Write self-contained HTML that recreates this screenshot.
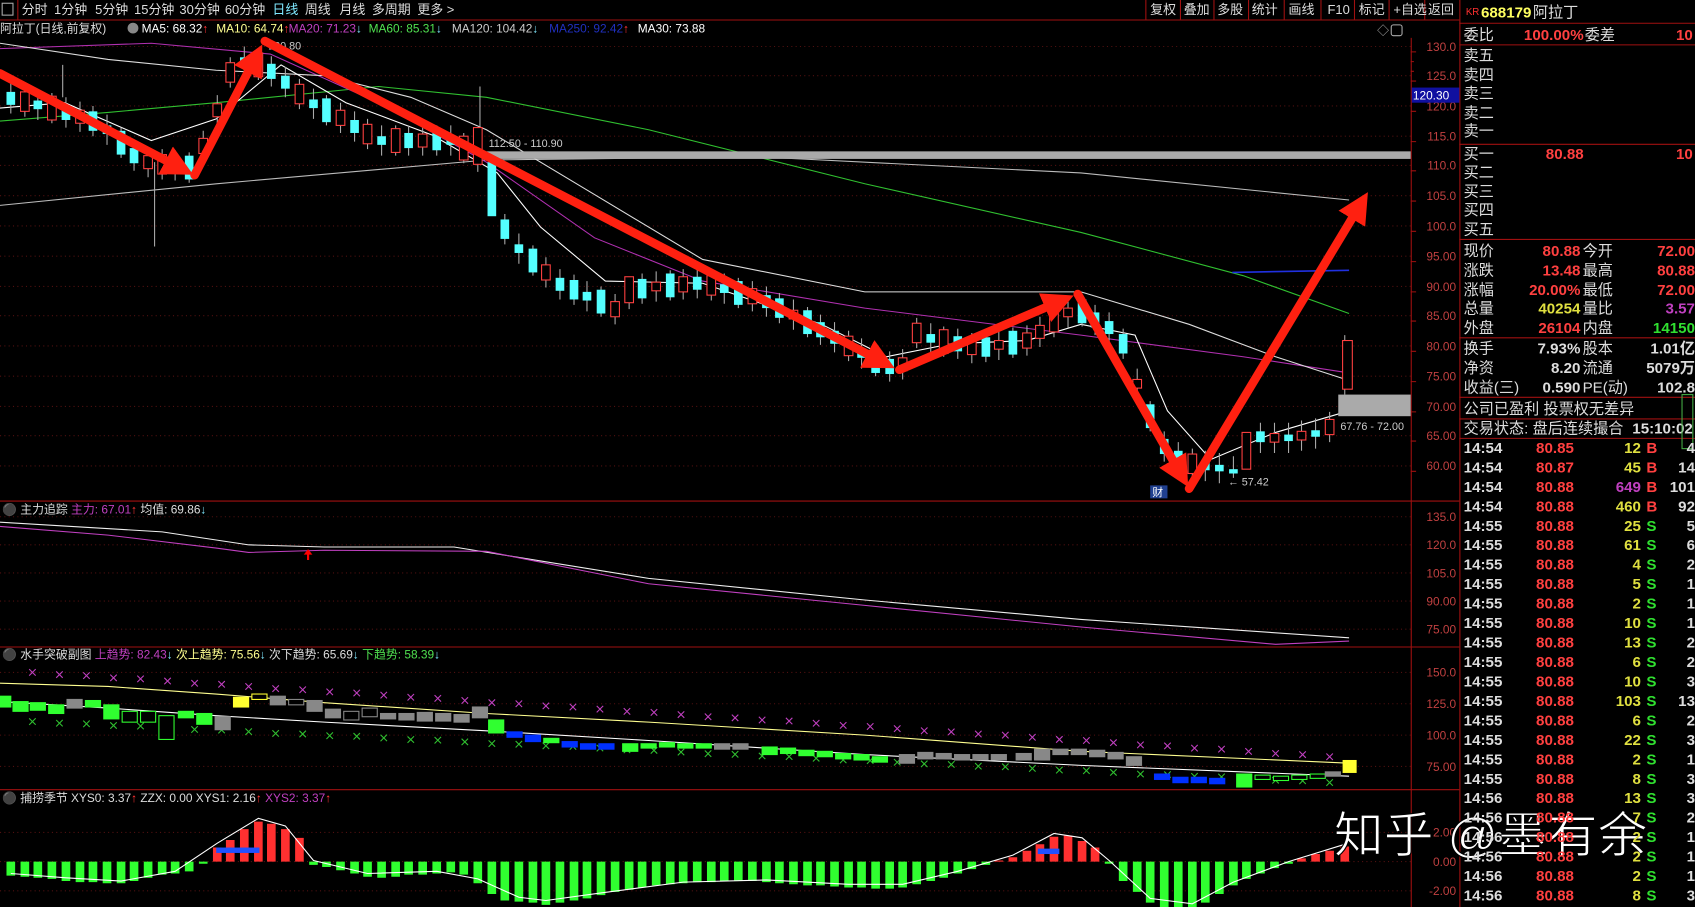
<!DOCTYPE html>
<html><head><meta charset="utf-8"><style>
html,body{margin:0;padding:0;background:#000;width:1695px;height:907px;overflow:hidden}
svg{display:block}
text{font-family:"Liberation Sans","Noto Sans CJK SC",sans-serif}
.u{fill:#000;stroke:#ff4040;stroke-width:1}
.d{fill:#54ffff}
.ax text{fill:#c04040;font-size:11px;text-anchor:end}
.gl line{stroke:#501010;stroke-dasharray:1 3}
.rp text{font-size:14px;fill:#ddd}
.b{font-weight:bold}
.r{fill:#ff4040 !important}
.y{fill:#e0e040 !important}
.g{fill:#30e030 !important}
.p{fill:#c040c0 !important}
.e{text-anchor:end}
</style></head><body>
<svg width="1695" height="907" viewBox="0 0 1568 839" preserveAspectRatio="none" xmlns="http://www.w3.org/2000/svg">
<defs>
<marker id="ah" viewBox="0 0 10 10" refX="5" refY="5" markerWidth="3.6" markerHeight="3.6" orient="auto" markerUnits="strokeWidth"><path d="M0 0L10 5L0 10z" fill="#ff2010"/></marker>
<marker id="xp" viewBox="-4 -4 8 8" markerWidth="8" markerHeight="8" markerUnits="userSpaceOnUse"><path d="M-3 -3L3 3M3 -3L-3 3" stroke="#c040c0" stroke-width="1"/></marker>
<marker id="xg" viewBox="-4 -4 8 8" markerWidth="8" markerHeight="8" markerUnits="userSpaceOnUse"><path d="M-3 -3L3 3M3 -3L-3 3" stroke="#30c030" stroke-width="1"/></marker>
</defs>
<rect width="1568" height="839" fill="#000"/>
<g class="gl">
<line x1="0" x2="1305" y1="43" y2="43"/><line x1="0" x2="1305" y1="70" y2="70"/><line x1="0" x2="1305" y1="98" y2="98"/><line x1="0" x2="1305" y1="126" y2="126"/><line x1="0" x2="1305" y1="153" y2="153"/><line x1="0" x2="1305" y1="181" y2="181"/><line x1="0" x2="1305" y1="209" y2="209"/><line x1="0" x2="1305" y1="237" y2="237"/><line x1="0" x2="1305" y1="265" y2="265"/><line x1="0" x2="1305" y1="292" y2="292"/><line x1="0" x2="1305" y1="320" y2="320"/><line x1="0" x2="1305" y1="348" y2="348"/><line x1="0" x2="1305" y1="376" y2="376"/><line x1="0" x2="1305" y1="403" y2="403"/><line x1="0" x2="1305" y1="431" y2="431"/>
<line x1="0" x2="1305" y1="478" y2="478"/><line x1="0" x2="1305" y1="504" y2="504"/><line x1="0" x2="1305" y1="530" y2="530"/><line x1="0" x2="1305" y1="556" y2="556"/><line x1="0" x2="1305" y1="582" y2="582"/>
<line x1="0" x2="1305" y1="622" y2="622"/><line x1="0" x2="1305" y1="651" y2="651"/><line x1="0" x2="1305" y1="680" y2="680"/><line x1="0" x2="1305" y1="709" y2="709"/>
<line x1="0" x2="1305" y1="770" y2="770"/><line x1="0" x2="1305" y1="797" y2="797"/><line x1="0" x2="1305" y1="824" y2="824"/>
</g>
<g stroke="#a01010" stroke-width="1" fill="none">
<line x1="0" y1="18.5" x2="1350" y2="18.5"/>
<line x1="1305.5" y1="35" x2="1305.5" y2="839"/>
<line x1="1350.5" y1="0" x2="1350.5" y2="839"/>
<line x1="0" y1="463.5" x2="1350" y2="463.5"/>
<line x1="0" y1="598.5" x2="1350" y2="598.5"/>
<line x1="0" y1="730.5" x2="1350" y2="730.5"/>
<line x1="1350" y1="21.5" x2="1568" y2="21.5"/>
<line x1="1350" y1="41.5" x2="1568" y2="41.5"/>
<line x1="1350" y1="133.5" x2="1568" y2="133.5"/>
<line x1="1350" y1="221.5" x2="1568" y2="221.5"/>
<line x1="1350" y1="312.5" x2="1568" y2="312.5"/>
<line x1="1350" y1="367.5" x2="1568" y2="367.5"/>
<line x1="1350" y1="387.5" x2="1568" y2="387.5"/>
<line x1="1350" y1="405.5" x2="1568" y2="405.5"/>
<line x1="16.5" y1="0" x2="16.5" y2="18"/>
<line x1="1060" y1="0" x2="1060" y2="18"/><line x1="1092" y1="0" x2="1092" y2="18"/><line x1="1123" y1="0" x2="1123" y2="18"/><line x1="1155" y1="0" x2="1155" y2="18"/><line x1="1188" y1="0" x2="1188" y2="18"/><line x1="1222" y1="0" x2="1222" y2="18"/><line x1="1253" y1="0" x2="1253" y2="18"/><line x1="1285" y1="0" x2="1285" y2="18"/><line x1="1318" y1="0" x2="1318" y2="18"/>
<path d="M1305 48h5M1305 57h3M1305 66h3M1305 75h5M1305 103h5M1305 131h5M1305 158h5M1305 186h5M1305 214h5M1305 242h5M1305 270h5M1305 297h5M1305 325h5M1305 353h5M1305 381h5M1305 408h5M1305 436h5"/>
</g>
<g font-size="12" fill="#ddd">
<rect x="2" y="3" width="10" height="11" fill="none" stroke="#aaa"/>
<text x="20" y="13">分时</text><text x="50" y="13">1分钟</text><text x="88" y="13">5分钟</text><text x="124" y="13">15分钟</text><text x="166" y="13">30分钟</text><text x="208" y="13">60分钟</text>
<text x="252" y="13" fill="#7fe8ff">日线</text><text x="282" y="13">周线</text><text x="314" y="13">月线</text><text x="344" y="13">多周期</text><text x="386" y="13">更多 &gt;</text>
<text x="1064" y="13">复权</text><text x="1095" y="13">叠加</text><text x="1126" y="13">多股</text><text x="1158" y="13">统计</text><text x="1192" y="13">画线</text><text x="1228" y="13">F10</text><text x="1257" y="13">标记</text><text x="1289" y="13">+自选</text><text x="1321" y="13">返回</text>
</g>
<text x="1356" y="14" font-size="9" fill="#ff3030">KR</text><text x="1370" y="16" font-size="14" fill="#ffff60" font-weight="bold">688179</text><text x="1418" y="16" font-size="14" fill="#ddd">阿拉丁</text>
<g font-size="11">
<text x="0" y="30" fill="#ddd">阿拉丁(日线,前复权)</text>
<circle cx="123" cy="26" r="5" fill="#888"/>
<text x="131" y="30" fill="#fff">MA5: 68.32<tspan fill="#f33">↑</tspan></text>
<text x="200" y="30" fill="#ffff90">MA10: 64.74<tspan fill="#f33">↑</tspan></text>
<text x="267" y="30" fill="#c040c0">MA20: 71.23<tspan fill="#7fe8ff">↓</tspan></text>
<text x="341" y="30" fill="#50e050">MA60: 85.31<tspan fill="#7fe8ff">↓</tspan></text>
<text x="418" y="30" fill="#ccc">MA120: 104.42<tspan fill="#7fe8ff">↓</tspan></text>
<text x="508" y="30" fill="#2030c0">MA250: 92.42<tspan fill="#f33">↑</tspan></text>
<text x="590" y="30" fill="#fff">MA30: 73.88</text>
<text x="1274" y="32" fill="#aaa">◇</text><rect x="1287" y="23" width="10" height="10" fill="none" stroke="#aaa" rx="2"/>
</g>
<g font-size="11">
<text x="2" y="475" fill="#ddd">⚫ 主力追踪 <tspan fill="#c040c0">主力: 67.01</tspan><tspan fill="#f33">↑</tspan> 均值: 69.86<tspan fill="#7fe8ff">↓</tspan></text>
<text x="2" y="609" fill="#ddd">⚫ 水手突破副图 <tspan fill="#c040c0">上趋势: 82.43</tspan><tspan fill="#7fe8ff">↓</tspan> <tspan fill="#ffff90">次上趋势: 75.56</tspan><tspan fill="#7fe8ff">↓</tspan> 次下趋势: 65.69<tspan fill="#7fe8ff">↓</tspan> <tspan fill="#50e050">下趋势: 58.39</tspan><tspan fill="#7fe8ff">↓</tspan></text>
<text x="2" y="742" fill="#ddd">⚫ 捕捞季节 XYS0: 3.37<tspan fill="#f33">↑</tspan>    ZZX: 0.00      XYS1: 2.16<tspan fill="#f33">↑</tspan> <tspan fill="#c040c0">XYS2: 3.37</tspan><tspan fill="#f33">↑</tspan></text>
</g>
<g fill="none" stroke-width="1">
<polyline stroke="#bbb" points="0,190 200,170 450,148 700,145 1000,160 1248,185"/>
<polyline stroke="#30c030" points="0,112 100,104 200,95 350,80 450,90 600,120 800,170 1000,215 1150,255 1248,290"/>
<polyline stroke="#b030b0" points="0,45 140,40 250,50 350,95 450,150 550,220 650,260 800,285 1000,310 1150,330 1248,345"/>
<polyline stroke="#ddd" points="0,40 100,55 200,65 300,70 380,90 450,120 550,180 650,240 800,270 1000,270 1100,300 1180,330 1248,352"/>
<polyline stroke="#fff" points="0,100 60,95 140,130 200,110 260,60 320,95 400,125 460,160 500,210 560,260 650,262 760,300 820,330 880,318 950,315 1000,300 1050,310 1080,380 1120,425 1180,400 1248,380"/>
<line x1="1140" y1="252" x2="1248" y2="250" stroke="#2030e0" stroke-width="1.5"/>
</g>
<path fill="none" stroke="#aaa" stroke-width="1" d="M10 77v28M23 80v28M35 83v28M48 86v28M61 90v28M74 94v28M86 98v28M99 106v28M112 118v28M124 130v28M137 136v28M150 138v28M162 139v28M175 141v28M188 121v28M201 88v28M213 53v28M226 43v28M239 46v28M251 52v28M264 62v28M277 73v28M290 82v28M302 88v28M315 95v28M328 103v28M340 110v28M353 116v28M366 116v28M378 116v28M391 116v28M404 116v28M417 116v28M429 123v28M442 131v28M455 161v28M467 198v28M480 216v28M493 227v28M505 238v28M518 249v28M531 254v28M543 260v28M556 265v28M569 272v28M582 258v28M594 253v28M607 251v28M620 250v28M632 249v28M645 248v28M658 250v28M670 253v28M683 257v28M696 260v28M709 265v28M721 271v28M734 277v28M747 284v28M759 291v28M772 298v28M785 306v28M797 313v28M810 320v28M823 325v28M835 323v28M848 294v28M861 299v28M873 302v28M886 304v28M899 308v28M912 307v28M924 305v28M937 303v28M950 301v28M962 293v28M975 284v28M988 275v28M1001 274v28M1013 282v28M1026 289v28M1039 304v28M1052 341v28M1064 371v28M1077 399v28M1090 409v28M1103 415v28M1115 417v28M1128 419v28M1141 422v20M1153 406v28M1166 391v28M1179 391v28M1192 391v28M1204 389v28M1217 387v28M1230 381v28M1244 310v55M143 150v78M444 80v70M58 60v30"/>
<g>
<rect class="d" x="6" y="85" width="8" height="12"/><rect class="u" x="19" y="85" width="8" height="18"/><rect class="d" x="31" y="93" width="8" height="8"/><rect class="u" x="44" y="89" width="8" height="22"/><rect class="d" x="57" y="97" width="8" height="14"/><rect class="u" x="70" y="102" width="8" height="12"/><rect class="d" x="82" y="103" width="8" height="18"/><rect class="d" x="95" y="116" width="8" height="8"/><rect class="d" x="108" y="121" width="8" height="22"/><rect class="d" x="120" y="137" width="8" height="14"/>
<rect class="u" x="133" y="144" width="8" height="12"/><rect class="u" x="146" y="143" width="8" height="18"/><rect class="d" x="158" y="149" width="8" height="8"/><rect class="d" x="171" y="144" width="8" height="22"/><rect class="u" x="184" y="128" width="8" height="14"/><rect class="u" x="197" y="96" width="8" height="12"/><rect class="u" x="209" y="58" width="8" height="18"/><rect class="d" x="222" y="53" width="8" height="8"/><rect class="u" x="235" y="49" width="8" height="22"/><rect class="d" x="247" y="59" width="8" height="14"/>
<rect class="d" x="260" y="70" width="8" height="12"/><rect class="u" x="273" y="78" width="8" height="18"/><rect class="d" x="286" y="92" width="8" height="8"/><rect class="d" x="298" y="91" width="8" height="22"/><rect class="u" x="311" y="102" width="8" height="14"/><rect class="d" x="324" y="111" width="8" height="12"/><rect class="u" x="336" y="115" width="8" height="18"/><rect class="d" x="349" y="126" width="8" height="8"/><rect class="u" x="362" y="119" width="8" height="22"/><rect class="d" x="374" y="123" width="8" height="14"/>
<rect class="u" x="387" y="124" width="8" height="12"/><rect class="d" x="400" y="121" width="8" height="18"/><rect class="d" x="413" y="126" width="8" height="8"/><rect class="u" x="425" y="126" width="8" height="22"/><rect class="u" x="438" y="118" width="8" height="34"/><rect class="d" x="451" y="150" width="8" height="50"/><rect class="d" x="463" y="203" width="8" height="18"/><rect class="d" x="476" y="226" width="8" height="8"/><rect class="d" x="489" y="230" width="8" height="22"/><rect class="u" x="501" y="245" width="8" height="14"/>
<rect class="d" x="514" y="257" width="8" height="12"/><rect class="d" x="527" y="259" width="8" height="18"/><rect class="d" x="539" y="270" width="8" height="8"/><rect class="d" x="552" y="268" width="8" height="22"/><rect class="u" x="565" y="279" width="8" height="14"/><rect class="u" x="578" y="256" width="8" height="24"/><rect class="d" x="590" y="258" width="8" height="18"/><rect class="u" x="603" y="261" width="8" height="8"/><rect class="d" x="616" y="253" width="8" height="22"/><rect class="u" x="628" y="256" width="8" height="14"/>
<rect class="d" x="641" y="256" width="8" height="12"/><rect class="u" x="654" y="255" width="8" height="18"/><rect class="d" x="666" y="263" width="8" height="8"/><rect class="d" x="679" y="260" width="8" height="22"/><rect class="u" x="692" y="267" width="8" height="14"/><rect class="d" x="705" y="273" width="8" height="12"/><rect class="d" x="717" y="276" width="8" height="18"/><rect class="u" x="730" y="287" width="8" height="8"/><rect class="d" x="743" y="287" width="8" height="22"/><rect class="d" x="755" y="298" width="8" height="14"/>
<rect class="d" x="768" y="306" width="8" height="12"/><rect class="u" x="781" y="311" width="8" height="18"/><rect class="d" x="793" y="323" width="8" height="8"/><rect class="d" x="806" y="323" width="8" height="22"/><rect class="d" x="819" y="332" width="8" height="14"/><rect class="u" x="831" y="331" width="8" height="12"/><rect class="u" x="844" y="299" width="8" height="18"/><rect class="d" x="857" y="309" width="8" height="8"/><rect class="u" x="869" y="305" width="8" height="22"/><rect class="d" x="882" y="311" width="8" height="14"/>
<rect class="u" x="895" y="316" width="8" height="12"/><rect class="d" x="908" y="312" width="8" height="18"/><rect class="u" x="920" y="315" width="8" height="8"/><rect class="d" x="933" y="306" width="8" height="22"/><rect class="u" x="946" y="308" width="8" height="14"/><rect class="u" x="958" y="301" width="8" height="12"/><rect class="u" x="971" y="289" width="8" height="18"/><rect class="u" x="984" y="285" width="8" height="8"/><rect class="d" x="997" y="277" width="8" height="22"/><rect class="d" x="1009" y="289" width="8" height="14"/>
<rect class="d" x="1022" y="297" width="8" height="12"/><rect class="d" x="1035" y="309" width="8" height="18"/><rect class="u" x="1048" y="351" width="8" height="8"/><rect class="d" x="1060" y="374" width="8" height="22"/><rect class="d" x="1073" y="406" width="8" height="14"/><rect class="d" x="1086" y="417" width="8" height="12"/><rect class="u" x="1099" y="420" width="8" height="18"/><rect class="d" x="1111" y="427" width="8" height="8"/><rect class="d" x="1124" y="430" width="8" height="6"/><rect class="d" x="1137" y="434" width="8" height="4"/>
<rect class="u" x="1149" y="400" width="8" height="34"/><rect class="d" x="1162" y="399" width="8" height="10"/><rect class="u" x="1175" y="401" width="8" height="8"/><rect class="d" x="1188" y="402" width="8" height="6"/><rect class="u" x="1200" y="399" width="8" height="8"/><rect class="d" x="1213" y="398" width="8" height="6"/><rect class="u" x="1226" y="388" width="8" height="14"/><rect class="u" x="1242" y="315" width="9" height="45"/>
</g>
<rect x="450" y="140" width="855" height="7" fill="#aaa"/>
<rect x="1238" y="365" width="67" height="20" fill="#aaa"/>
<text x="452" y="136" font-size="10" fill="#ccc">112.50 - 110.90</text>
<text x="1240" y="398" font-size="10" fill="#ccc">67.76 - 72.00</text>
<text x="248" y="46" font-size="10" fill="#ccc">130.80</text>
<text x="1136" y="449" font-size="10" fill="#ccc">← 57.42</text>
<rect x="1064" y="449" width="16" height="12" fill="#204090"/><text x="1066" y="459" font-size="10" fill="#fff">财</text>
<g stroke="#ff2010" stroke-width="8" marker-end="url(#ah)" stroke-linecap="round">
<line x1="0" y1="68" x2="166" y2="155"/>
<line x1="180" y1="162" x2="236" y2="54"/>
<line x1="245" y1="38" x2="815" y2="334"/>
<line x1="832" y1="342" x2="980" y2="279"/>
<line x1="997" y1="272" x2="1092" y2="438"/>
<line x1="1100" y1="452" x2="1258" y2="190"/>
</g>
<g class="ax">
<text x="1347" y="47">130.0</text><text x="1347" y="74">125.0</text><text x="1347" y="102">120.0</text><text x="1347" y="130">115.0</text><text x="1347" y="157">110.0</text><text x="1347" y="185">105.0</text><text x="1347" y="213">100.0</text><text x="1347" y="241">95.00</text><text x="1347" y="269">90.00</text><text x="1347" y="296">85.00</text><text x="1347" y="324">80.00</text><text x="1347" y="352">75.00</text><text x="1347" y="380">70.00</text><text x="1347" y="407">65.00</text><text x="1347" y="435">60.00</text>
<text x="1347" y="482">135.0</text><text x="1347" y="508">120.0</text><text x="1347" y="534">105.0</text><text x="1347" y="560">90.00</text><text x="1347" y="586">75.00</text>
<text x="1347" y="626">150.0</text><text x="1347" y="655">125.0</text><text x="1347" y="684">100.0</text><text x="1347" y="713">75.00</text>
<text x="1347" y="774">2.00</text><text x="1347" y="801">0.00</text><text x="1347" y="828">-2.00</text>
</g>
<rect x="1306" y="81" width="44" height="14" fill="#1010a0"/><text x="1307" y="92" font-size="11" fill="#fff">120.30</text>
<polyline fill="none" stroke="#eee" points="0,483 150,492 230,504 300,506 420,506 600,535 800,555 1000,573 1248,590"/>
<polyline fill="none" stroke="#c040c0" points="0,487 100,495 200,507 230,511 300,509 450,510 600,540 800,560 1000,580 1180,596 1248,593"/>
<path d="M285 508 l-4 5 h3 v5 h2 v-5 h3 z" fill="#f00"/>
<polyline fill="none" stroke="#ffff90" points="0,632 100,635 200,642 300,650 450,660 600,668 800,680 1000,695 1248,706"/>
<polyline fill="none" stroke="#fff" points="0,649 100,655 200,662 300,668 450,676 600,685 800,698 1000,708 1248,718"/>
<polyline fill="none" stroke="none" marker-mid="url(#xp)" points="5,620 30,622 55,624 80,625 105,627 130,628 155,630 180,632 205,633 230,635 255,637 280,638 305,640 330,641 355,643 380,645 405,646 430,648 455,650 480,651 505,653 530,654 555,656 580,658 605,659 630,661 655,663 680,664 705,666 730,667 755,669 780,671 805,672 830,674 855,676 880,677 905,679 930,680 955,682 980,684 1005,685 1030,687 1055,689 1080,690 1105,692 1130,693 1155,695 1180,697 1205,698 1230,700 1250,701"/>
<polyline fill="none" stroke="none" marker-mid="url(#xg)" transform="matrix(1,-0.018,0,1,0,46)" points="5,620 30,622 55,624 80,625 105,627 130,628 155,630 180,632 205,633 230,635 255,637 280,638 305,640 330,641 355,643 380,645 405,646 430,648 455,650 480,651 505,653 530,654 555,656 580,658 605,659 630,661 655,663 680,664 705,666 730,667 755,669 780,671 805,672 830,674 855,676 880,677 905,679 930,680 955,682 980,684 1005,685 1030,687 1055,689 1080,690 1105,692 1130,693 1155,695 1180,697 1205,698 1230,700 1250,701"/>
<g stroke-width="1">
<rect x="0" y="644" width="10" height="10" fill="#30ff30" stroke="#30ff30"/><rect x="12" y="649" width="14" height="9" fill="#30ff30" stroke="#30ff30"/><rect x="28" y="650" width="14" height="7" fill="#30ff30" stroke="#30ff30"/><rect x="45" y="652" width="14" height="8" fill="#30ff30" stroke="#30ff30"/><rect x="62" y="647" width="14" height="8" fill="#888" stroke="#888"/><rect x="79" y="648" width="14" height="6" fill="#30ff30" stroke="#30ff30"/><rect x="96" y="652" width="14" height="13" fill="#30ff30" stroke="#30ff30"/><rect x="113" y="658" width="14" height="10" fill="#000" stroke="#30ff30"/><rect x="130" y="658" width="14" height="10" fill="#000" stroke="#30ff30"/><rect x="147" y="662" width="14" height="22" fill="#000" stroke="#30ff30"/>
<rect x="165" y="658" width="14" height="6" fill="#30ff30" stroke="#30ff30"/><rect x="182" y="660" width="14" height="10" fill="#30ff30" stroke="#30ff30"/><rect x="199" y="663" width="14" height="12" fill="#888" stroke="#888"/><rect x="216" y="645" width="14" height="9" fill="#ffff30" stroke="#ffff30"/><rect x="233" y="642" width="14" height="5" fill="#000" stroke="#ffff30"/><rect x="250" y="644" width="14" height="8" fill="#888" stroke="#888"/><rect x="267" y="647" width="14" height="5" fill="#000" stroke="#888"/><rect x="284" y="648" width="14" height="10" fill="#888" stroke="#888"/><rect x="301" y="656" width="14" height="8" fill="#888" stroke="#888"/><rect x="318" y="658" width="14" height="8" fill="#000" stroke="#888"/>
<rect x="335" y="655" width="14" height="8" fill="#000" stroke="#888"/><rect x="352" y="660" width="14" height="5" fill="#888" stroke="#888"/><rect x="369" y="660" width="14" height="6" fill="#888" stroke="#888"/><rect x="386" y="659" width="14" height="8" fill="#888" stroke="#888"/><rect x="403" y="660" width="14" height="7" fill="#888" stroke="#888"/><rect x="420" y="661" width="14" height="7" fill="#888" stroke="#888"/><rect x="437" y="654" width="14" height="10" fill="#888" stroke="#888"/><rect x="452" y="666" width="14" height="12" fill="#30ff30" stroke="#30ff30"/><rect x="469" y="677" width="14" height="5" fill="#0030ff" stroke="#0030ff"/><rect x="486" y="680" width="14" height="6" fill="#0030ff" stroke="#0030ff"/>
<rect x="503" y="683" width="14" height="4" fill="#30ff30" stroke="#30ff30"/><rect x="520" y="686" width="14" height="5" fill="#0030ff" stroke="#0030ff"/><rect x="537" y="688" width="14" height="5" fill="#0030ff" stroke="#0030ff"/><rect x="554" y="688" width="14" height="5" fill="#0030ff" stroke="#0030ff"/><rect x="576" y="688" width="14" height="7" fill="#30ff30" stroke="#30ff30"/><rect x="593" y="688" width="14" height="4" fill="#30ff30" stroke="#30ff30"/><rect x="610" y="687" width="14" height="4" fill="#30ff30" stroke="#30ff30"/><rect x="627" y="688" width="14" height="4" fill="#30ff30" stroke="#30ff30"/><rect x="644" y="688" width="14" height="4" fill="#30ff30" stroke="#30ff30"/><rect x="661" y="688" width="14" height="5" fill="#888" stroke="#888"/>
<rect x="678" y="688" width="14" height="5" fill="#888" stroke="#888"/><rect x="705" y="691" width="14" height="7" fill="#30ff30" stroke="#30ff30"/><rect x="722" y="692" width="14" height="5" fill="#30ff30" stroke="#30ff30"/><rect x="739" y="694" width="14" height="5" fill="#30ff30" stroke="#30ff30"/><rect x="756" y="695" width="14" height="5" fill="#30ff30" stroke="#30ff30"/><rect x="773" y="697" width="14" height="5" fill="#30ff30" stroke="#30ff30"/><rect x="790" y="698" width="14" height="5" fill="#30ff30" stroke="#30ff30"/><rect x="807" y="700" width="14" height="5" fill="#30ff30" stroke="#30ff30"/><rect x="832" y="698" width="14" height="8" fill="#888" stroke="#888"/><rect x="849" y="696" width="14" height="6" fill="#888" stroke="#888"/>
<rect x="866" y="697" width="14" height="5" fill="#888" stroke="#888"/><rect x="883" y="698" width="14" height="5" fill="#888" stroke="#888"/><rect x="900" y="698" width="14" height="5" fill="#888" stroke="#888"/><rect x="917" y="698" width="14" height="5" fill="#888" stroke="#888"/><rect x="940" y="697" width="14" height="6" fill="#888" stroke="#888"/><rect x="957" y="693" width="14" height="10" fill="#888" stroke="#888"/><rect x="974" y="693" width="14" height="5" fill="#888" stroke="#888"/><rect x="991" y="693" width="14" height="5" fill="#888" stroke="#888"/><rect x="1008" y="694" width="14" height="6" fill="#888" stroke="#888"/><rect x="1025" y="696" width="14" height="6" fill="#888" stroke="#888"/>
<rect x="1042" y="700" width="14" height="8" fill="#888" stroke="#888"/><rect x="1068" y="716" width="14" height="5" fill="#0030ff" stroke="#0030ff"/><rect x="1085" y="719" width="14" height="5" fill="#0030ff" stroke="#0030ff"/><rect x="1102" y="719" width="14" height="5" fill="#0030ff" stroke="#0030ff"/><rect x="1119" y="720" width="14" height="5" fill="#0030ff" stroke="#0030ff"/><rect x="1144" y="716" width="14" height="12" fill="#30ff30" stroke="#30ff30"/><rect x="1161" y="717" width="14" height="4" fill="#000" stroke="#30ff30"/><rect x="1178" y="718" width="14" height="4" fill="#000" stroke="#30ff30"/><rect x="1195" y="717" width="14" height="4" fill="#000" stroke="#30ff30"/><rect x="1212" y="716" width="14" height="4" fill="#000" stroke="#30ff30"/><rect x="1226" y="714" width="14" height="4" fill="#888" stroke="#888"/>
</g>
<rect x="1242" y="703" width="13" height="12" fill="#ffff30"/>
<path fill="none" stroke="#30ff30" stroke-width="8" d="M10 797V810M23 797V811M35 797V812M48 797V813M61 797V815M74 797V816M86 797V816M99 797V817M112 797V817M124 797V815M137 797V812M150 797V809M162 797V808M175 797V806M188 797V799M290 797V800M302 797V802M315 797V805M328 797V808M340 797V811M353 797V812M366 797V811M378 797V809M391 797V809M404 797V808M417 797V807M429 797V809M442 797V817M455 797V827M467 797V833M480 797V834M493 797V835M505 797V837M518 797V835M531 797V833M543 797V831M556 797V828M569 797V825M582 797V823M594 797V821M607 797V819M620 797V818M632 797V817M645 797V816M658 797V816M670 797V815M683 797V815M696 797V815M709 797V816M721 797V817M734 797V818M747 797V819M759 797V819M772 797V820M785 797V821M797 797V821M810 797V822M823 797V822M835 797V821M848 797V818M861 797V815M873 797V812M886 797V808M899 797V804M912 797V800M1026 797V799M1039 797V815M1052 797V825M1064 797V835M1077 797V839M1090 797V839M1103 797V839M1115 797V835M1128 797V827M1141 797V819M1153 797V813M1166 797V808M1179 797V803M1192 797V799"/>
<path fill="none" stroke="#ff3030" stroke-width="8" d="M201 797V784M213 797V777M226 797V767M239 797V760M251 797V762M264 797V767M277 797V775M924 797V796M937 797V793M950 797V787M962 797V781M975 797V774M988 797V773M1001 797V778M1013 797V784M1204 797V794M1217 797V790M1230 797V787M1244 797V783"/>
<rect x="200" y="784" width="40" height="5" fill="#2050ff"/><rect x="960" y="785" width="20" height="5" fill="#2050ff"/>
<polyline fill="none" stroke="#fff" points="10,808 61,812 112,815 162,806 201,780 239,757 264,764 290,796 340,808 404,806 442,813 480,830 505,833 556,826 632,816 709,814 785,818 835,818 886,806 937,791 975,771 1001,775 1026,796 1064,831 1103,836 1141,816 1192,797 1244,781"/>
<text x="1234" y="788" font-size="45" fill="#fff" stroke="#000" stroke-width="1" textLength="290" lengthAdjust="spacingAndGlyphs">知乎 @墨有余</text>
<g class="rp">
<text x="1354" y="37">委比</text><text x="1465" y="37" class="r b e">100.00%</text><text x="1466" y="37">委差</text><text x="1566" y="37" class="r b e">10</text>
<text x="1354" y="56">卖五</text><text x="1354" y="74">卖四</text><text x="1354" y="91">卖三</text><text x="1354" y="109">卖二</text><text x="1354" y="126">卖一</text>
<text x="1354" y="147">买一</text><text x="1465" y="147" class="r b e">80.88</text><text x="1566" y="147" class="r b e">10</text>
<text x="1354" y="164">买二</text><text x="1354" y="182">买三</text><text x="1354" y="199">买四</text><text x="1354" y="217">买五</text>
<text x="1354" y="237">现价</text><text x="1462" y="237" class="r b e">80.88</text><text x="1464" y="237">今开</text><text x="1568" y="237" class="r b e">72.00</text>
<text x="1354" y="255">涨跌</text><text x="1462" y="255" class="r b e">13.48</text><text x="1464" y="255">最高</text><text x="1568" y="255" class="r b e">80.88</text>
<text x="1354" y="273">涨幅</text><text x="1462" y="273" class="r b e">20.00%</text><text x="1464" y="273">最低</text><text x="1568" y="273" class="r b e">72.00</text>
<text x="1354" y="290">总量</text><text x="1462" y="290" class="y b e">40254</text><text x="1464" y="290">量比</text><text x="1568" y="290" class="p b e">3.57</text>
<text x="1354" y="308">外盘</text><text x="1462" y="308" class="r b e">26104</text><text x="1464" y="308">内盘</text><text x="1568" y="308" class="g b e">14150</text>
<text x="1354" y="327">换手</text><text x="1462" y="327" class="b e">7.93%</text><text x="1464" y="327">股本</text><text x="1568" y="327" class="b e">1.01亿</text>
<text x="1354" y="345">净资</text><text x="1462" y="345" class="b e">8.20</text><text x="1464" y="345">流通</text><text x="1568" y="345" class="b e">5079万</text>
<text x="1354" y="363">收益(三)</text><text x="1462" y="363" class="b e">0.590</text><text x="1464" y="363">PE(动)</text><text x="1568" y="363" class="b e">102.8</text>
<text x="1354" y="383">公司已盈利 投票权无差异</text>
<text x="1354" y="401">交易状态: 盘后连续撮合</text><text x="1566" y="401" class="b e">15:10:02</text>
</g>
<rect x="1556" y="365" width="10" height="50" fill="none" stroke="#4a4"/>
<g class="rp b" font-size="13">
<text x="1354" y="419">14:54</text><text x="1456" y="419" class="r e">80.85</text><text x="1518" y="419" class="y e">12</text><text x="1523" y="419" class="r">B</text><text x="1568" y="419" class="e">4</text>
<text x="1354" y="437">14:54</text><text x="1456" y="437" class="r e">80.87</text><text x="1518" y="437" class="y e">45</text><text x="1523" y="437" class="r">B</text><text x="1568" y="437" class="e">14</text>
<text x="1354" y="455">14:54</text><text x="1456" y="455" class="r e">80.88</text><text x="1518" y="455" class="p e">649</text><text x="1523" y="455" class="r">B</text><text x="1568" y="455" class="e">101</text>
<text x="1354" y="473">14:54</text><text x="1456" y="473" class="r e">80.88</text><text x="1518" y="473" class="y e">460</text><text x="1523" y="473" class="r">B</text><text x="1568" y="473" class="e">92</text>
<text x="1354" y="491">14:55</text><text x="1456" y="491" class="r e">80.88</text><text x="1518" y="491" class="y e">25</text><text x="1523" y="491" class="g">S</text><text x="1568" y="491" class="e">5</text>
<text x="1354" y="509">14:55</text><text x="1456" y="509" class="r e">80.88</text><text x="1518" y="509" class="y e">61</text><text x="1523" y="509" class="g">S</text><text x="1568" y="509" class="e">6</text>
<text x="1354" y="527">14:55</text><text x="1456" y="527" class="r e">80.88</text><text x="1518" y="527" class="y e">4</text><text x="1523" y="527" class="g">S</text><text x="1568" y="527" class="e">2</text>
<text x="1354" y="545">14:55</text><text x="1456" y="545" class="r e">80.88</text><text x="1518" y="545" class="y e">5</text><text x="1523" y="545" class="g">S</text><text x="1568" y="545" class="e">1</text>
<text x="1354" y="563">14:55</text><text x="1456" y="563" class="r e">80.88</text><text x="1518" y="563" class="y e">2</text><text x="1523" y="563" class="g">S</text><text x="1568" y="563" class="e">1</text>
<text x="1354" y="581">14:55</text><text x="1456" y="581" class="r e">80.88</text><text x="1518" y="581" class="y e">10</text><text x="1523" y="581" class="g">S</text><text x="1568" y="581" class="e">1</text>
<text x="1354" y="599">14:55</text><text x="1456" y="599" class="r e">80.88</text><text x="1518" y="599" class="y e">13</text><text x="1523" y="599" class="g">S</text><text x="1568" y="599" class="e">2</text>
<text x="1354" y="617">14:55</text><text x="1456" y="617" class="r e">80.88</text><text x="1518" y="617" class="y e">6</text><text x="1523" y="617" class="g">S</text><text x="1568" y="617" class="e">2</text>
<text x="1354" y="635">14:55</text><text x="1456" y="635" class="r e">80.88</text><text x="1518" y="635" class="y e">10</text><text x="1523" y="635" class="g">S</text><text x="1568" y="635" class="e">3</text>
<text x="1354" y="653">14:55</text><text x="1456" y="653" class="r e">80.88</text><text x="1518" y="653" class="y e">103</text><text x="1523" y="653" class="g">S</text><text x="1568" y="653" class="e">13</text>
<text x="1354" y="671">14:55</text><text x="1456" y="671" class="r e">80.88</text><text x="1518" y="671" class="y e">6</text><text x="1523" y="671" class="g">S</text><text x="1568" y="671" class="e">2</text>
<text x="1354" y="689">14:55</text><text x="1456" y="689" class="r e">80.88</text><text x="1518" y="689" class="y e">22</text><text x="1523" y="689" class="g">S</text><text x="1568" y="689" class="e">3</text>
<text x="1354" y="707">14:55</text><text x="1456" y="707" class="r e">80.88</text><text x="1518" y="707" class="y e">2</text><text x="1523" y="707" class="g">S</text><text x="1568" y="707" class="e">1</text>
<text x="1354" y="725">14:55</text><text x="1456" y="725" class="r e">80.88</text><text x="1518" y="725" class="y e">8</text><text x="1523" y="725" class="g">S</text><text x="1568" y="725" class="e">3</text>
<text x="1354" y="743">14:56</text><text x="1456" y="743" class="r e">80.88</text><text x="1518" y="743" class="y e">13</text><text x="1523" y="743" class="g">S</text><text x="1568" y="743" class="e">3</text>
<text x="1354" y="761">14:56</text><text x="1456" y="761" class="r e">80.88</text><text x="1518" y="761" class="y e">7</text><text x="1523" y="761" class="g">S</text><text x="1568" y="761" class="e">2</text>
<text x="1354" y="779">14:56</text><text x="1456" y="779" class="r e">80.88</text><text x="1518" y="779" class="y e">2</text><text x="1523" y="779" class="g">S</text><text x="1568" y="779" class="e">1</text>
<text x="1354" y="797">14:56</text><text x="1456" y="797" class="r e">80.88</text><text x="1518" y="797" class="y e">2</text><text x="1523" y="797" class="g">S</text><text x="1568" y="797" class="e">1</text>
<text x="1354" y="815">14:56</text><text x="1456" y="815" class="r e">80.88</text><text x="1518" y="815" class="y e">2</text><text x="1523" y="815" class="g">S</text><text x="1568" y="815" class="e">1</text>
<text x="1354" y="833">14:56</text><text x="1456" y="833" class="r e">80.88</text><text x="1518" y="833" class="y e">8</text><text x="1523" y="833" class="g">S</text><text x="1568" y="833" class="e">3</text>
</g>
</svg>
</body></html>
